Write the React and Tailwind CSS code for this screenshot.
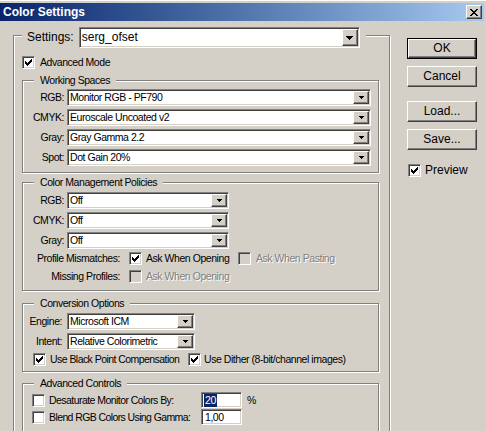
import React from "react";

// win2000 bevels
const sunken =
  "border border-t-[#808080] border-l-[#808080] border-b-white border-r-white shadow-[inset_1px_1px_0_#404040,inset_-1px_-1px_0_#d4d0c8]";
const raised =
  "border border-t-white border-l-white border-b-[#404040] border-r-[#404040] shadow-[inset_-1px_-1px_0_#808080]";

const Arrow = ({ big }) =>
  big ? (
    <svg width="7" height="4" viewBox="0 0 7 4" shapeRendering="crispEdges">
      <path d="M0 0h7v1H0zM1 1h5v1H1zM2 2h3v1H2zM3 3h1v1H3z" fill="#000" />
    </svg>
  ) : (
    <svg width="5" height="3" viewBox="0 0 5 3" shapeRendering="crispEdges">
      <path d="M0 0h5v1H0zM1 1h3v1H1zM2 2h1v1H2z" fill="#000" />
    </svg>
  );

const Tick = () => (
  <svg width="7" height="7" viewBox="0 0 7 7" shapeRendering="crispEdges">
    <path
      d="M0 2h1v3H0zM1 3h1v3H1zM2 4h1v3H2zM3 3h1v3H3zM4 2h1v3H4zM5 1h1v3H5zM6 0h1v3H6z"
      fill="#000"
    />
  </svg>
);

function Check({ checked, disabled }) {
  return (
    <div
      className={`w-[13px] h-[13px] shrink-0 flex items-center justify-center ${sunken} ${
        disabled ? "bg-[#d4d0c8]" : "bg-white"
      }`}
    >
      {checked && <Tick />}
    </div>
  );
}

function Combo({ value, className, big }) {
  return (
    <div className={`flex p-[1px] bg-white ${sunken} ${className}`}>
      <div className={`flex-1 flex items-center pl-[1px] ${big ? "text-[12px] tracking-normal" : ""}`}>
        {value}
      </div>
      <div className={`w-[16px] flex items-center justify-center bg-[#d4d0c8] ${raised}`}>
        <Arrow big={big} />
      </div>
    </div>
  );
}

function Group({ title, className, children }) {
  return (
    <div
      className={`relative border border-[#808080] shadow-[inset_1px_1px_0_#fff,1px_1px_0_#fff] ${className}`}
    >
      <span className="absolute left-[11px] top-[-8px] bg-[#d4d0c8] px-[6px] leading-[14px]">
        {title}
      </span>
      {children}
    </div>
  );
}

function Row({ label, labelW, children }) {
  return (
    <div className="flex items-center h-[17px]">
      <span className={`text-right ${labelW}`}>{label}</span>
      {children}
    </div>
  );
}

const Button = ({ children, def, className = "" }) => (
  <div className={`w-[70px] h-[21px] ${def ? "border border-black" : ""} ${className}`}>
    <div
      className={`w-full h-full flex items-center justify-center text-[12px] tracking-normal bg-[#d4d0c8] ${raised}`}
    >
      {children}
    </div>
  </div>
);

const dim = "text-[#808080] [text-shadow:1px_1px_0_#fff]";

export default function App() {
  return (
    <div className="w-[486px] h-[431px] overflow-hidden bg-[#d4d0c8] text-black text-[10.5px] tracking-[-0.45px] leading-[13px] font-['Liberation_Sans',Arial,sans-serif]">
      <div className="h-[3px] border-t border-white" />
      <div className="h-[18px] mr-[2px] flex items-center justify-between pl-[3px] pr-[2px] bg-linear-to-r from-[#0a246a] to-[#a6caf0]">
        <span className="text-white font-bold text-[12px] tracking-normal">Color Settings</span>
        <div className={`w-[16px] h-[14px] flex items-center justify-center bg-[#d4d0c8] ${raised}`}>
          <svg width="8" height="7" viewBox="0 0 8 7" shapeRendering="crispEdges">
            <path
              d="M0 0h2v1H0zM6 0h2v1H6zM1 1h2v1H1zM5 1h2v1H5zM2 2h4v1H2zM3 3h2v1H3zM2 4h4v1H2zM1 5h2v1H1zM5 5h2v1H5zM0 6h2v1H0zM6 6h2v1H6z"
              fill="#000"
            />
          </svg>
        </div>
      </div>

      <div className="flex">
        {/* settings group */}
        <div className="relative ml-[13px] mt-[14px] w-[377px] h-[420px] border border-[#808080] shadow-[inset_1px_1px_0_#fff,1px_1px_0_#fff] pl-[8px] pt-[20px]">
          <div className="absolute left-[8px] top-[-9px] h-[21px] flex items-center gap-[5px] px-[5px] pr-[6px] bg-[#d4d0c8]">
            <span className="text-[12px] tracking-normal">Settings:</span>
            <Combo value="serg_ofset" big className="w-[281px] h-[21px]" />
          </div>

          <div className="flex items-center gap-[5px] h-[13px]">
            <Check checked />
            <span>Advanced Mode</span>
          </div>

          <Group title="Working Spaces" className="mt-[11px] w-[357px] h-[93px] pt-[8px]">
            <div className="flex flex-col gap-[3px]">
              {[
                ["RGB:", "Monitor RGB - PF790"],
                ["CMYK:", "Euroscale Uncoated v2"],
                ["Gray:", "Gray Gamma 2.2"],
                ["Spot:", "Dot Gain 20%"],
              ].map(([l, v]) => (
                <Row key={l} label={l} labelW="w-[41px]">
                  <Combo value={v} className="ml-[3px] w-[304px] h-[17px]" />
                </Row>
              ))}
            </div>
          </Group>

          <Group title="Color Management Policies" className="mt-[9px] w-[357px] h-[109px] pt-[9px]">
            <div className="flex flex-col gap-[3px]">
              {["RGB:", "CMYK:", "Gray:"].map((l) => (
                <Row key={l} label={l} labelW="w-[41px]">
                  <Combo value="Off" className="ml-[3px] w-[162px] h-[17px]" />
                </Row>
              ))}
              <div className="flex items-center h-[13px]">
                <span className="w-[97px] text-right">Profile Mismatches:</span>
                <div className="ml-[9px]">
                  <Check checked />
                </div>
                <span className="ml-[4px] w-[92px]">Ask When Opening</span>
                <Check disabled />
                <span className={`ml-[5px] ${dim}`}>Ask When Pasting</span>
              </div>
              <div className="flex items-center h-[13px] mt-[2px]">
                <span className="w-[97px] text-right">Missing Profiles:</span>
                <div className="ml-[9px]">
                  <Check disabled />
                </div>
                <span className={`ml-[4px] ${dim}`}>Ask When Opening</span>
              </div>
            </div>
          </Group>

          <Group title="Conversion Options" className="mt-[12px] w-[357px] h-[69px] pt-[9px]">
            <div className="flex flex-col gap-[3px]">
              <Row label="Engine:" labelW="w-[39px]">
                <Combo value="Microsoft ICM" className="ml-[5px] w-[128px] h-[17px]" />
              </Row>
              <Row label="Intent:" labelW="w-[39px]">
                <Combo value="Relative Colorimetric" className="ml-[5px] w-[128px] h-[17px]" />
              </Row>
              <div className="flex items-center h-[13px] pl-[10px]">
                <div className="flex items-center gap-[4px] w-[155px]">
                  <Check checked />
                  <span className="tracking-[-0.55px]">Use Black Point Compensation</span>
                </div>
                <Check checked />
                <span className="ml-[3px]">Use Dither (8-bit/channel images)</span>
              </div>
            </div>
          </Group>

          <Group title="Advanced Controls" className="mt-[11px] w-[357px] h-[80px] pt-[8px] pl-[9px]">
            <div className="flex flex-col gap-[1px]">
              <div className="flex items-center h-[16px]">
                <div className="flex items-center gap-[4px] w-[169px]">
                  <Check />
                  <span className="tracking-[-0.55px]">Desaturate Monitor Colors By:</span>
                </div>
                <div className={`w-[41px] h-[16px] bg-white flex items-center pl-[2px] ${sunken}`}>
                  <span className="bg-[#0a246a] text-white px-[1px]">20</span>
                </div>
                <span className="ml-[5px]">%</span>
              </div>
              <div className="flex items-center h-[16px]">
                <div className="flex items-center gap-[4px] w-[169px]">
                  <Check />
                  <span className="tracking-[-0.6px]">Blend RGB Colors Using Gamma:</span>
                </div>
                <div className={`w-[41px] h-[16px] bg-white flex items-center pl-[3px] ${sunken}`}>
                  <span>1,00</span>
                </div>
              </div>
            </div>
          </Group>
        </div>

        {/* buttons */}
        <div className="ml-[17px] mt-[17px] flex flex-col">
          <Button def>OK</Button>
          <Button className="mt-[7px]">Cancel</Button>
          <Button className="mt-[14px]">Load...</Button>
          <Button className="mt-[7px]">Save...</Button>
          <div className="mt-[14px] ml-[1px] flex items-center gap-[4px]">
            <Check checked />
            <span className="text-[12px] tracking-normal">Preview</span>
          </div>
        </div>
      </div>
    </div>
  );
}
